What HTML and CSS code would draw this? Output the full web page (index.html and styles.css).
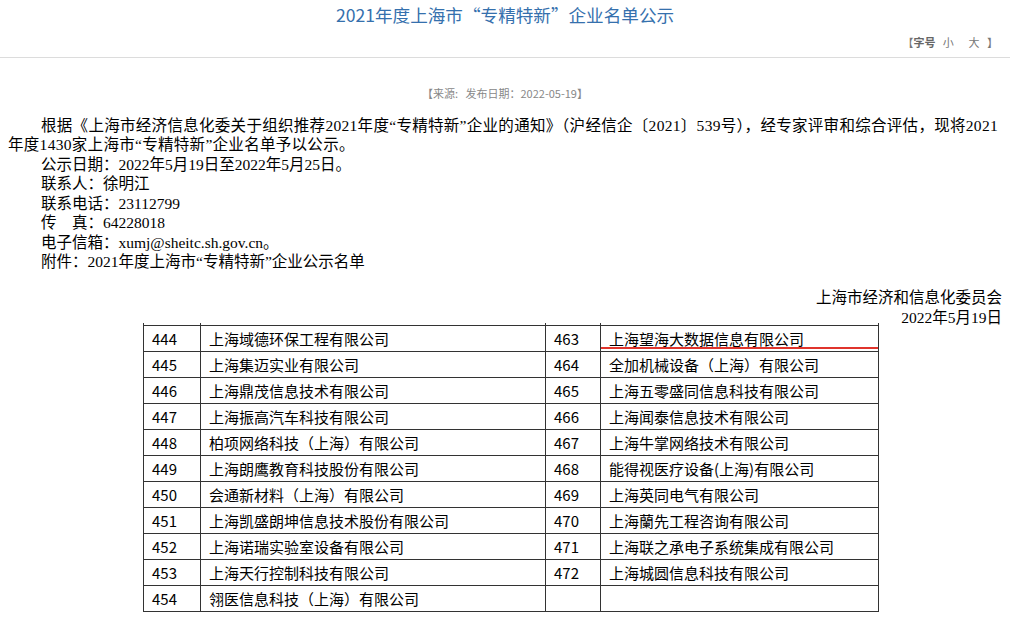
FILE: index.html
```html
<!DOCTYPE html>
<html lang="zh-CN">
<head>
<meta charset="utf-8">
<title>2021年度上海市“专精特新”企业名单公示</title>
<link rel="stylesheet" href="styles.css">
</head>
<body>
<div class="header">
  <h1 class="title">2021年度上海市“专精特新”企业名单公示</h1>
  <div class="fontsize">【<b>字号</b>&nbsp;&nbsp;&nbsp;<span>小</span>&nbsp;&nbsp;&nbsp;&nbsp;&nbsp;&nbsp;<span>大</span>&nbsp;&nbsp;&nbsp;】</div>
</div>
<div class="source">【来源:&nbsp;&nbsp; 发布日期：2022-05-19】</div>
<div class="content">
  <p class="para first">根据《上海市经济信息化委关于组织推荐2021年度“专精特新”企业的通知》（沪经信企〔2021〕539号），经专家评审和综合评估，现将2021年度1430家上海市“专精特新”企业名单予以公示。</p>
  <p class="para">公示日期：2022年5月19日至2022年5月25日。</p>
  <p class="para">联系人：徐明江</p>
  <p class="para">联系电话：23112799</p>
  <p class="para">传&nbsp;&nbsp;&nbsp;&nbsp;真：64228018</p>
  <p class="para">电子信箱：xumj@sheitc.sh.gov.cn。</p>
  <p class="para">附件：2021年度上海市“专精特新”企业公示名单</p>
  <div class="sign">
    <div>上海市经济和信息化委员会</div>
    <div>2022年5月19日</div>
  </div>
  <table class="list">
    <colgroup><col class="c-num"><col class="c-name"><col class="c-num2"><col class="c-name2"></colgroup>
    <tr class="stub"><td></td><td></td><td></td><td></td></tr>
    <tr><td>444</td><td>上海域德环保工程有限公司</td><td>463</td><td class="marked">上海望海大数据信息有限公司</td></tr>
    <tr><td>445</td><td>上海集迈实业有限公司</td><td>464</td><td>全加机械设备（上海）有限公司</td></tr>
    <tr><td>446</td><td>上海鼎茂信息技术有限公司</td><td>465</td><td>上海五零盛同信息科技有限公司</td></tr>
    <tr><td>447</td><td>上海振高汽车科技有限公司</td><td>466</td><td>上海闻泰信息技术有限公司</td></tr>
    <tr><td>448</td><td>柏项网络科技（上海）有限公司</td><td>467</td><td>上海牛掌网络技术有限公司</td></tr>
    <tr><td>449</td><td>上海朗鹰教育科技股份有限公司</td><td>468</td><td>能得视医疗设备(上海)有限公司</td></tr>
    <tr><td>450</td><td>会通新材料（上海）有限公司</td><td>469</td><td>上海英同电气有限公司</td></tr>
    <tr><td>451</td><td>上海凯盛朗坤信息技术股份有限公司</td><td>470</td><td>上海蘭先工程咨询有限公司</td></tr>
    <tr><td>452</td><td>上海诺瑞实验室设备有限公司</td><td>471</td><td>上海联之承电子系统集成有限公司</td></tr>
    <tr><td>453</td><td>上海天行控制科技有限公司</td><td>472</td><td>上海城圆信息科技有限公司</td></tr>
    <tr><td>454</td><td>翎医信息科技（上海）有限公司</td><td></td><td></td></tr>
  </table>
</div>
</body>
</html>
```

FILE: styles.css
```css
html, body {
  margin: 0;
  padding: 0;
  background: #fff;
}

body {
  font-family: "Liberation Serif", "Noto Sans CJK SC", serif;
  color: #000;
}

.header {
  height: 57px;
  border-bottom: 1px solid #dcdcdc;
}

.title {
  margin: 0;
  padding-top: 4px;
  font-family: "Noto Sans CJK SC", sans-serif;
  font-weight: normal;
  font-size: 17.6px;
  line-height: 22px;
  color: #3570ad;
  text-align: center;
}

.fontsize {
  margin-top: 9px;
  padding-right: 12px;
  text-align: right;
  font-family: "Noto Sans CJK SC", sans-serif;
  font-size: 11px;
  line-height: 14px;
  color: #777;
}

.fontsize b {
  font-weight: bold;
  color: #666;
}

.source {
  margin-top: 28px;
  text-align: center;
  font-family: "Noto Sans CJK SC", sans-serif;
  font-size: 11px;
  line-height: 14px;
  color: #888;
}

.content {
  padding: 15.5px 8px 0 8px;
}

.para {
  margin: 0;
  font-size: 15.5px;
  line-height: 19.5px;
  text-indent: 33px;
}

.para.first {
  letter-spacing: 0.3px;
}

.sign {
  margin-top: 16.5px;
  text-align: right;
  font-size: 15.5px;
  line-height: 20px;
}

.list {
  margin-top: -5px;
  margin-left: 135px;
  border-collapse: collapse;
  table-layout: fixed;
  width: 735px;
  font-family: "Noto Sans CJK SC", sans-serif;
  font-size: 15px;
}

.c-num { width: 57px; }
.c-name { width: 345px; }
.c-num2 { width: 55px; }
.c-name2 { width: 278px; }

.list td {
  height: 25px;
  padding: 0 0 0 8px;
  line-height: 25px;
  border: 1px solid #333;
  white-space: nowrap;
  vertical-align: middle;
}

.list tr.stub td {
  height: 2px;
  line-height: 2px;
  border-top: none;
  padding: 0;
}

.list td.marked {
  position: relative;
}

.list td.marked::after {
  content: "";
  position: absolute;
  left: 0;
  right: 0;
  bottom: 2px;
  height: 2px;
  background: #e0342c;
}
```
